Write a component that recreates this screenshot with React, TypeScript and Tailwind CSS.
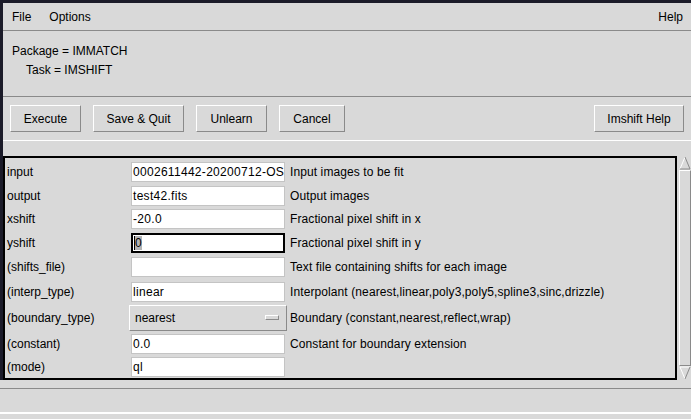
import type { ReactNode } from "react";

type Row = {
  label: string;
  value?: string;
  desc: string;
  rowClass: string;
  kind?: "entry" | "focus" | "menu";
};

const rows: Row[] = [
  { label: "input", value: "0002611442-20200712-OS", desc: "Input images to be fit", rowClass: "h-[24px]" },
  { label: "output", value: "test42.fits", desc: "Output images", rowClass: "h-[23px]" },
  { label: "xshift", value: "-20.0", desc: "Fractional pixel shift in x", rowClass: "h-[24px]" },
  { label: "yshift", value: "0", desc: "Fractional pixel shift in y", rowClass: "h-[23px]", kind: "focus" },
  { label: "(shifts_file)", value: "", desc: "Text file containing shifts for each image", rowClass: "h-[25px]" },
  {
    label: "(interp_type)",
    value: "linear",
    desc: "Interpolant (nearest,linear,poly3,poly5,spline3,sinc,drizzle)",
    rowClass: "h-[25px]",
  },
  {
    label: "(boundary_type)",
    value: "nearest",
    desc: "Boundary (constant,nearest,reflect,wrap)",
    rowClass: "h-[27px]",
    kind: "menu",
  },
  { label: "(constant)", value: "0.0", desc: "Constant for boundary extension", rowClass: "h-[25px]" },
  { label: "(mode)", value: "ql", desc: "", rowClass: "h-[22px]" },
];

function TkButton({ children, className }: { children: ReactNode; className: string }) {
  return (
    <div
      className={`flex h-[27px] items-center justify-center border border-t-white border-l-white border-r-[#8a8a8a] border-b-[#8a8a8a] bg-[#d9d9d9] ${className}`}
    >
      {children}
    </div>
  );
}

function ParamField({ row }: { row: Row }) {
  if (row.kind === "menu") {
    return (
      <div className="ml-[-2px] mr-[-2px] flex h-[26px] w-[158px] shrink-0 items-center justify-between border border-t-white border-l-white border-r-[#8a8a8a] border-b-[#8a8a8a] pl-[5px] pr-[7px]">
        <span>{row.value}</span>
        <span className="h-[5px] w-[14px] border border-t-white border-l-white border-r-[#8a8a8a] border-b-[#8a8a8a] bg-[#d9d9d9]" />
      </div>
    );
  }

  if (row.kind === "focus") {
    return (
      <div className="flex h-[20px] w-[154px] shrink-0 items-center border-2 border-black bg-white pl-[1px]">
        <span className="h-[14px] w-[1px] bg-black" />
        <span className="bg-[#b3b3b3] leading-[14px]">{row.value}</span>
      </div>
    );
  }

  return (
    <div className="flex h-[20px] w-[154px] shrink-0 items-center overflow-hidden whitespace-nowrap border border-[#c4c4c4] bg-white pl-[1px] tracking-[0.3px]">
      {row.value}
    </div>
  );
}

function ScrollArrow({ down }: { down?: boolean }) {
  return (
    <svg width="12" height="14" viewBox="0 0 12 14" className="block shrink-0">
      {down ? (
        <>
          <polygon points="1,1 11,1 6,13" fill="#d9d9d9" />
          <polyline points="1,1 11,1" stroke="#ffffff" fill="none" />
          <polyline points="1,1 6,13" stroke="#ffffff" fill="none" />
          <polyline points="11,1 6,13" stroke="#8a8a8a" fill="none" />
        </>
      ) : (
        <>
          <polygon points="6,1 11,13 1,13" fill="#d9d9d9" />
          <polyline points="6,1 1,13" stroke="#ffffff" fill="none" />
          <polyline points="6,1 11,13" stroke="#8a8a8a" fill="none" />
          <polyline points="1,13 11,13" stroke="#8a8a8a" fill="none" />
        </>
      )}
    </svg>
  );
}

export default function App() {
  return (
    <div className="flex h-[419px] w-[691px] flex-col overflow-hidden bg-[#d9d9d9] font-['Liberation_Sans',Arial,sans-serif] text-[12px] text-black">
      <div className="h-[3px] shrink-0 bg-[#1b1b29]" />

      <div className="flex flex-col border-l-[3px] border-[#1b1b29]">
        {/* menu bar */}
        <div className="flex h-[28px] items-center border-b border-[#8a8a8a] pl-[9px] pr-[8px]">
          <span>File</span>
          <span className="ml-[18px]">Options</span>
          <span className="ml-auto">Help</span>
        </div>

        {/* task info */}
        <div className="flex h-[65px] flex-col pl-[9px] pt-[11px] leading-[19px]">
          <span>Package = IMMATCH</span>
          <span className="pl-[14px]">Task = IMSHIFT</span>
        </div>

        {/* buttons */}
        <div className="flex items-center gap-[12px] border-t border-b border-t-[#8a8a8a] border-b-white pt-[8px] pb-[8px] pl-[7px] pr-[7px]">
          <TkButton className="w-[71px]">Execute</TkButton>
          <TkButton className="w-[91px]">Save &amp; Quit</TkButton>
          <TkButton className="w-[71px]">Unlearn</TkButton>
          <TkButton className="w-[66px]">Cancel</TkButton>
          <TkButton className="ml-auto w-[90px]">Imshift Help</TkButton>
        </div>

        {/* parameter panel */}
        <div className="mt-[15px] flex">
          <div className="flex h-[224px] w-[674px] flex-col border-2 border-black pt-[2px]">
            {rows.map((row) => (
              <div key={row.label} className={`flex items-center ${row.rowClass}`}>
                <span className="w-[126px] shrink-0 pl-[2px]">{row.label}</span>
                <ParamField row={row} />
                <span className="ml-[5px] whitespace-nowrap tracking-[0.1px]">{row.desc}</span>
              </div>
            ))}
          </div>
          <div className="ml-[2px] flex h-[224px] w-[12px] flex-col">
            <ScrollArrow />
            <div className="flex-1 border border-t-white border-l-white border-r-[#8a8a8a] border-b-[#8a8a8a]" />
            <ScrollArrow down />
          </div>
        </div>
      </div>

      {/* status area */}
      <div className="mt-[8px] h-[26px] border-t border-b-2 border-t-[#8a8a8a] border-b-white" />
    </div>
  );
}
